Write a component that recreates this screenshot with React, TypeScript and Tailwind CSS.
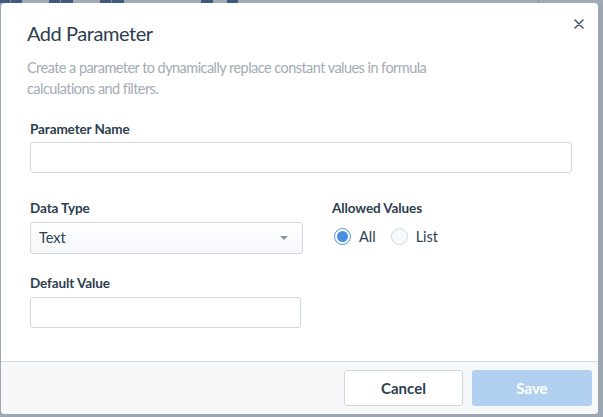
import React from 'react';

// background strip of the app behind the dialog overlay: [width, colour]
const strip: [number, string][] = [
  [10, '#3e5a7c'],
  [1, '#7f8fa2'],
  [11, '#3e5a7c'],
  [27, '#a1aab4'],
  [11, '#3e5a7c'],
  [1, '#7f8fa2'],
  [12, '#3e5a7c'],
  [27, '#a1aab4'],
  [11, '#3e5a7c'],
  [1, '#7f8fa2'],
  [12, '#3e5a7c'],
  [77, '#a1aab4'],
  [12, '#3e5a7c'],
  [14, '#a1aab4'],
  [11, '#3e5a7c'],
  [300, '#a1aab4'],
  [1, '#8d97a2'],
  [63, '#a1aab4'],
];

function Label({ children }: { children: React.ReactNode }) {
  return <div className="text-[13.5px] font-bold leading-4 tracking-[-0.1px] text-[#2d3e50]">{children}</div>;
}

function Radio({ checked, label }: { checked?: boolean; label: string }) {
  return (
    <label className="flex items-center gap-[8px]">
      <span
        className={
          checked
            ? 'flex h-[17px] w-[17px] items-center justify-center rounded-full border border-[#4a90e2] bg-white'
            : 'h-[17px] w-[17px] rounded-full border border-[#cfd7df] bg-[#f8f9fa]'
        }
      >
        {checked && <span className="h-[11px] w-[11px] rounded-full bg-[#4a90e2]" />}
      </span>
      <span className="text-[14.5px] text-[#2d3e50]">{label}</span>
    </label>
  );
}

export default function App() {
  return (
    <div
      className="flex h-[417px] w-[603px] flex-col bg-[#9ea7b1]"
      style={{ fontFamily: 'Lato, "Noto Sans", sans-serif' }}
    >
      <div className="flex h-[3px] shrink-0">
        {strip.map(([w, c], i) => (
          <div key={i} className="h-full shrink-0" style={{ width: w, backgroundColor: c }} />
        ))}
      </div>
      <div className="ml-px flex h-[411px] w-[597px] flex-col overflow-hidden rounded-[4px] bg-white">
        <div className="relative flex-1 px-[29px] pt-[18px]">
          <button className="absolute right-[14px] top-[16px] text-[#4a5a6a]">
            <svg width="10" height="10" viewBox="0 0 10 10">
              <path d="M1 1L9 9M9 1L1 9" stroke="currentColor" strokeWidth="1.6" strokeLinecap="round" />
            </svg>
          </button>
          <h2 className="-ml-[3px] text-[20px] leading-6 tracking-[-0.45px] text-[#2d3e50]">Add Parameter</h2>
          <p className="-ml-[3px] mt-[12px] w-[460px] text-[14.5px] leading-[21px] tracking-[-0.55px] text-[#a3abb4]">
            Create a parameter to dynamically replace constant values in formula calculations and filters.
          </p>
          <div className="mt-[22px]">
            <Label>Parameter Name</Label>
            <input className="mt-[5px] h-[31px] w-[542px] rounded-[3px] border border-[#cfd7df] bg-white px-2 outline-none" />
          </div>
          <div className="mt-[27px] flex">
            <div className="flex w-[302px] flex-col">
              <Label>Data Type</Label>
              <div className="mt-[6px] flex h-[32px] w-[273px] items-center justify-between rounded-[3px] border border-[#cfd7df] bg-gradient-to-b from-white to-[#f4f6f8] pl-[8px] pr-[14px]">
                <span className="text-[14.5px] text-[#2d3e50]">Text</span>
                <svg width="8" height="4" viewBox="0 0 8 4">
                  <path d="M0 0H8L4 4Z" fill="#8b96a2" />
                </svg>
              </div>
              <div className="mt-[21px]">
                <Label>Default Value</Label>
                <input className="mt-[6px] h-[31px] w-[271px] rounded-[3px] border border-[#cfd7df] bg-white px-2 outline-none" />
              </div>
            </div>
            <div className="flex flex-col">
              <Label>Allowed Values</Label>
              <div className="mt-[10px] flex items-center gap-[15px] pl-[2px]">
                <Radio checked label="All" />
                <Radio label="List" />
              </div>
            </div>
          </div>
        </div>
        <div className="flex h-[53px] shrink-0 items-start justify-end gap-[9px] border-t border-[#d3d9df] bg-[#f7f8f9] pr-[6px] pt-[8px]">
          <button className="h-[36px] w-[119px] rounded-[3px] border border-[#cfd7df] bg-white text-[15px] font-bold text-[#2d3e50]">
            Cancel
          </button>
          <button className="h-[36px] w-[120px] rounded-[3px] bg-[#b1cfee] text-[15px] font-bold text-white">
            Save
          </button>
        </div>
      </div>
    </div>
  );
}
